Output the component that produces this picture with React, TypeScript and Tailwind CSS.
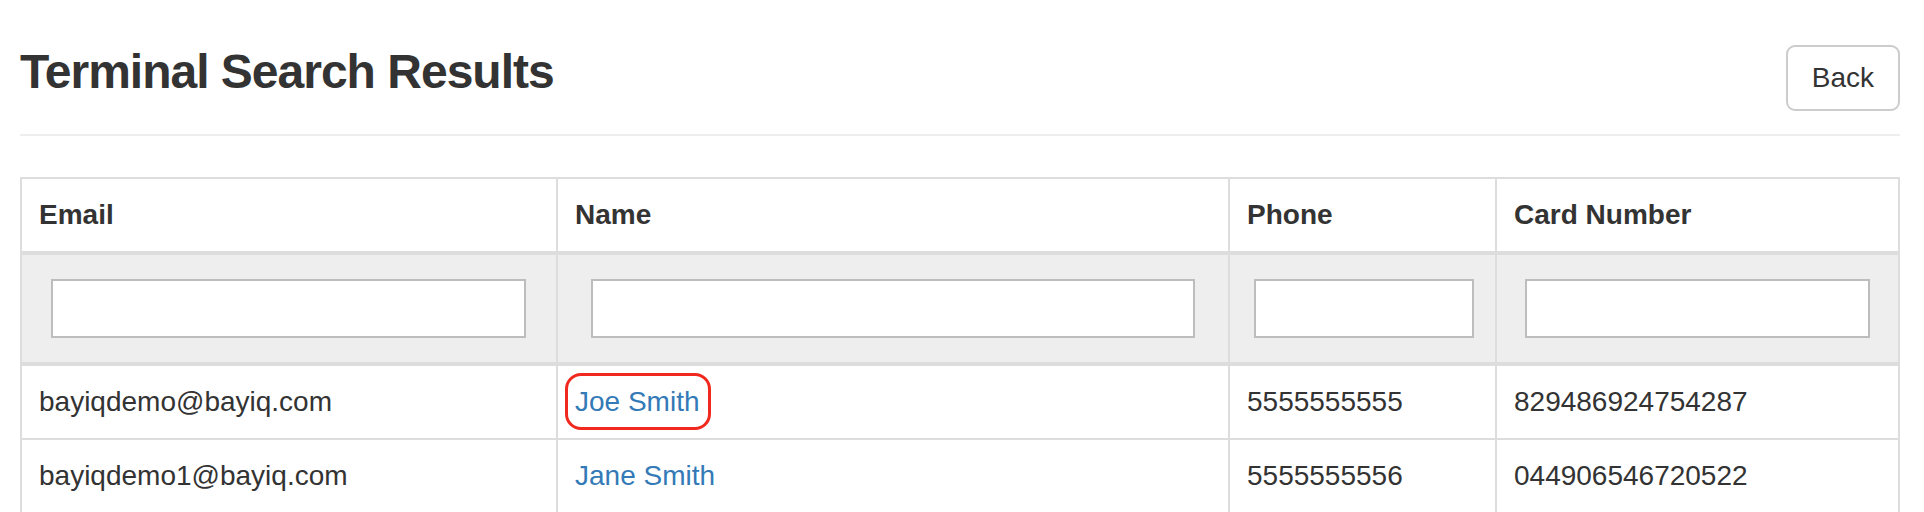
import React from "react";

const rows = [
  { email: "bayiqdemo@bayiq.com", name: "Joe Smith", phone: "5555555555", card: "829486924754287", marked: true },
  { email: "bayiqdemo1@bayiq.com", name: "Jane Smith", phone: "5555555556", card: "044906546720522", marked: false },
];

const columns = [
  { label: "Email", width: "w-[536px]", pad: "pl-[29px] pr-[30px]" },
  { label: "Name", width: "w-[672px]", pad: "pl-[33px] pr-[33px]" },
  { label: "Phone", width: "w-[267px]", pad: "pl-[24px] pr-[21px]" },
  { label: "Card Number", width: "w-[403px]", pad: "pl-[28px] pr-[28px]" },
];

export default function App() {
  return (
    <div
      className="min-h-[512px] bg-white text-[#333333] text-[28px] leading-[40px]"
      style={{ fontFamily: '"Liberation Sans", Arial, sans-serif' }}
    >
      <div className="ml-[20px] w-[1880px]">
        {/* page header */}
        <div className="flex items-start justify-between border-b-2 border-[#eeeeee] pt-[45px] h-[136px]">
          <h3 className="mt-[3px] text-[48px] leading-[48px] font-bold tracking-[-1px]">
            Terminal Search Results
          </h3>
          <button className="h-[66px] px-[24px] border-2 border-[#cccccc] rounded-[9px] bg-white text-[28px] text-[#333333]">
            Back
          </button>
        </div>

        <table className="mt-[41px] w-[1878px] table-fixed border-collapse border-2 border-[#dddddd]">
          <colgroup>
            {columns.map((c) => (
              <col key={c.label} className={c.width} />
            ))}
          </colgroup>
          <thead>
            <tr>
              {columns.map((c) => (
                <th
                  key={c.label}
                  className="text-left font-bold px-[17px] py-[16px] border-2 border-b-4 border-[#dddddd]"
                >
                  {c.label}
                </th>
              ))}
            </tr>
            <tr className="bg-[#eeeeee]">
              {columns.map((c) => (
                <th
                  key={c.label}
                  className={`${c.pad} py-[24px] border-2 border-b-4 border-[#dddddd] font-normal`}
                >
                  <input
                    type="text"
                    className="block w-full h-[59px] bg-white border-2 border-[#bdbdbd] outline-none"
                  />
                </th>
              ))}
            </tr>
          </thead>
          <tbody>
            {rows.map((r) => (
              <tr key={r.email}>
                <td className="px-[17px] py-[16px] border-2 border-[#dddddd]">{r.email}</td>
                <td className="px-[17px] py-[16px] border-2 border-[#dddddd]">
                  <span className="relative inline-block text-[#337ab7]">
                    {r.name}
                    {r.marked && (
                      <span className="absolute -left-[10px] -right-[11px] -top-[9px] -bottom-[8px] border-[3px] border-[#f0281e] rounded-[16px]" />
                    )}
                  </span>
                </td>
                <td className="px-[17px] py-[16px] border-2 border-[#dddddd]">{r.phone}</td>
                <td className="px-[17px] py-[16px] border-2 border-[#dddddd]">{r.card}</td>
              </tr>
            ))}
          </tbody>
        </table>
      </div>
    </div>
  );
}
